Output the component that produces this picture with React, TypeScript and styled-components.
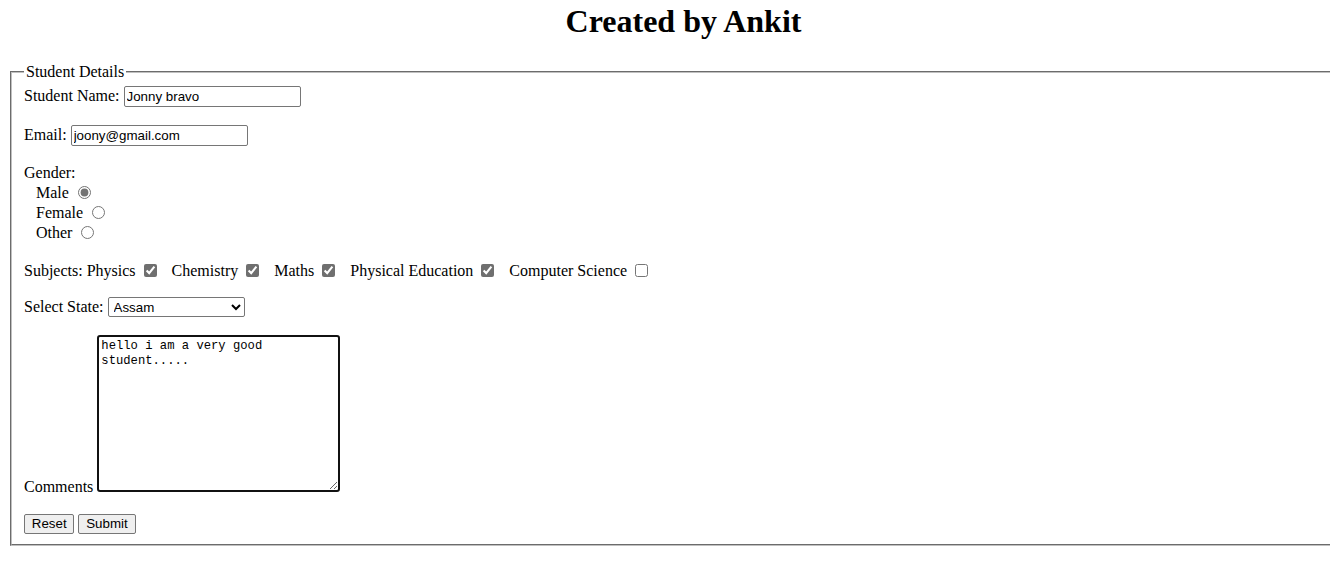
import React from "react";
import styled, { createGlobalStyle } from "styled-components";

const Global = createGlobalStyle`
  html { overflow: hidden; }
  body {
    margin: 3px 0 8px 8px;
    background: #fff;
    color: #000;
    font-family: "Liberation Serif", "Times New Roman", serif;
    font-size: 16px;
  }
`;

const Page = styled.div`
  display: flex;
  flex-direction: column;
`;

const Title = styled.h1`
  margin: 0 0 23px;
  padding-left: 29px;
  text-align: center;
  font-size: 32px;
  font-weight: bold;
`;

const Fieldset = styled.fieldset`
  margin: 0 0 0 2px;
  padding: 4.6px 12px 10px;
  border: 2px groove #c0c0c0;
  border-right: none;
`;

const Legend = styled.legend`
  padding: 0 2px;
`;

const Form = styled.div`
  display: flex;
  flex-direction: column;
  align-items: flex-start;
`;

const FieldRow = styled.div<{ $mt?: number }>`
  display: flex;
  align-items: center;
  gap: 4px;
  height: 21px;
  margin-top: ${(p) => p.$mt ?? 0}px;
`;

const TextLine = styled.div<{ $mt?: number; $indent?: number }>`
  display: flex;
  align-items: center;
  gap: 4px;
  height: 20px;
  line-height: 20px;
  margin-top: ${(p) => p.$mt ?? 0}px;
  padding-left: ${(p) => p.$indent ?? 0}px;
`;

const TextInput = styled.input<{ $w: number }>`
  box-sizing: border-box;
  width: ${(p) => p.$w}px;
  height: 21px;
  margin: 0;
  padding: 1px 2px;
  border: 1px solid #767676;
  border-radius: 2px;
  font-family: "Liberation Sans", Arial, sans-serif;
  font-size: 13.33px;
  color: #000;
  background: #fff;
`;

const Choice = styled.label<{ $gap: number }>`
  display: inline-flex;
  align-items: center;
  gap: ${(p) => p.$gap}px;
`;

const Radio = styled.input.attrs({ type: "radio" })`
  margin: 0;
  width: 13px;
  height: 13px;
  accent-color: #737373;
`;

const Check = styled.input.attrs({ type: "checkbox" })`
  margin: 0;
  width: 13px;
  height: 13px;
  accent-color: #6f6f6f;
`;

const SubjectGroup = styled.div`
  display: flex;
  align-items: center;
  gap: 15px;
`;

const Select = styled.select`
  box-sizing: border-box;
  width: 137px;
  height: 20px;
  margin: 0;
  padding: 0 1px;
  border: 1px solid #767676;
  border-radius: 2px;
  font-family: "Liberation Sans", Arial, sans-serif;
  font-size: 13.33px;
  color: #000;
  background: #fff;
`;

const CommentRow = styled.div<{ $mt?: number }>`
  margin-top: ${(p) => p.$mt ?? 0}px;
`;

const TextArea = styled.textarea`
  box-sizing: border-box;
  width: 243px;
  height: 157px;
  margin: 0 0 0 4px;
  padding: 2px;
  border: 2px solid #111;
  border-radius: 3px;
  font-family: "Liberation Mono", "DejaVu Sans Mono", monospace;
  font-size: 12.2px;
  line-height: 15.5px;
  color: #000;
  vertical-align: baseline;
  outline: none;
`;

const ButtonRow = styled.div<{ $mt?: number }>`
  display: flex;
  gap: 4px;
  margin-top: ${(p) => p.$mt ?? 0}px;
`;

const Button = styled.button`
  box-sizing: border-box;
  height: 20px;
  margin: 0;
  padding: 0 6.8px;
  border: 1px solid #767676;
  border-radius: 2px;
  background: #efefef;
  font-family: "Liberation Sans", Arial, sans-serif;
  font-size: 13.33px;
  color: #000;
`;

const states = ["Assam", "Bihar", "Delhi", "Goa", "Kerala"];

export default function App() {
  return (
    <>
      <Global />
      <Page>
        <Title>Created by Ankit</Title>
        <Fieldset>
          <Legend>Student Details</Legend>
          <Form>
            <FieldRow>
              Student Name:
              <TextInput $w={177} defaultValue="Jonny bravo" />
            </FieldRow>
            <FieldRow $mt={18}>
              Email:
              <TextInput $w={177} type="email" defaultValue="joony@gmail.com" />
            </FieldRow>
            <TextLine $mt={17}>Gender:</TextLine>
            <TextLine $indent={12}>
              <Choice $gap={9}>
                Male
                <Radio name="gender" defaultChecked />
              </Choice>
            </TextLine>
            <TextLine $indent={12}>
              <Choice $gap={9}>
                Female
                <Radio name="gender" />
              </Choice>
            </TextLine>
            <TextLine $indent={12}>
              <Choice $gap={9}>
                Other
                <Radio name="gender" />
              </Choice>
            </TextLine>
            <TextLine $mt={18}>
              Subjects:
              <SubjectGroup>
                <Choice $gap={8}>
                  Physics
                  <Check defaultChecked />
                </Choice>
                <Choice $gap={8}>
                  Chemistry
                  <Check defaultChecked />
                </Choice>
                <Choice $gap={8}>
                  Maths
                  <Check defaultChecked />
                </Choice>
                <Choice $gap={8}>
                  Physical Education
                  <Check defaultChecked />
                </Choice>
                <Choice $gap={8}>
                  Computer Science
                  <Check />
                </Choice>
              </SubjectGroup>
            </TextLine>
            <FieldRow $mt={16}>
              Select State:
              <Select defaultValue="Assam">
                {states.map((s) => (
                  <option key={s}>{s}</option>
                ))}
              </Select>
            </FieldRow>
            <CommentRow $mt={17}>
              Comments
              <TextArea
                spellCheck={false}
                defaultValue="hello i am a very good student....."
              />
            </CommentRow>
            <ButtonRow $mt={18}>
              <Button type="reset">Reset</Button>
              <Button type="submit">Submit</Button>
            </ButtonRow>
          </Form>
        </Fieldset>
      </Page>
    </>
  );
}
